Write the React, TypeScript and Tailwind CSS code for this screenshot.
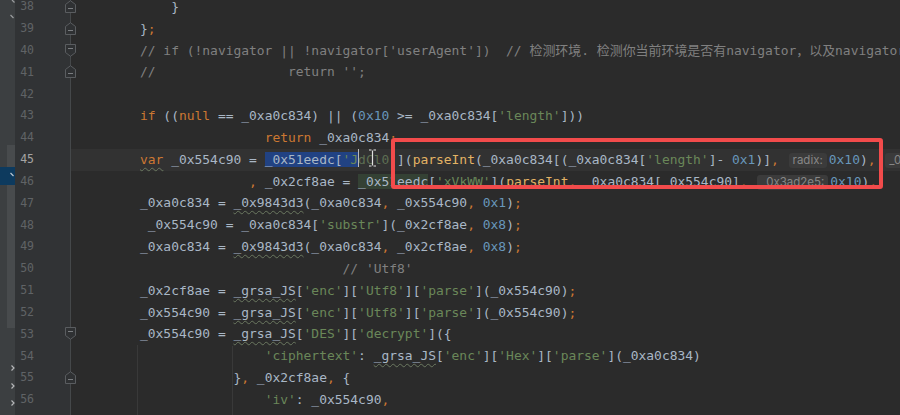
import React from "react";

const K = ({ children }: { children: React.ReactNode }) => <span className="text-[#cc7832]">{children}</span>;
const S = ({ children }: { children: React.ReactNode }) => <span className="text-[#6a8759]">{children}</span>;
const N = ({ children }: { children: React.ReactNode }) => <span className="text-[#6897bb]">{children}</span>;
const C = ({ children }: { children: React.ReactNode }) => <span className="text-[#808080]">{children}</span>;
const F = ({ children }: { children: React.ReactNode }) => <span className="text-[#e3b264]">{children}</span>;
const W = ({ children, cls = "" }: { children: React.ReactNode; cls?: string }) => (
  <span className={`underline decoration-wavy decoration-[#6b7860] decoration-1 underline-offset-[3px] ${cls}`}>{children}</span>
);
const Hint = ({ children }: { children: React.ReactNode }) => (
  <span className="inline-block align-middle h-[15px] leading-[15px] px-[4px] mx-[2px] rounded-[3px] bg-[#3b3b3b] text-[#878787] text-[11.5px] font-['Inter',sans-serif]">
    {children}
  </span>
);

const lines: { n: number; el: React.ReactNode; cur?: boolean }[] = [
  { n: 38, el: <>{"    }"}</> },
  { n: 39, el: <>{"}"}<K>;</K></> },
  {
    n: 40,
    el: <C>{"// if (!navigator || !navigator['userAgent'])  // 检测环境. 检测你当前环境是否有navigator，以及navigator的userAgent"}</C>,
  },
  { n: 41, el: <C>{"//                 return '';"}</C> },
  { n: 42, el: <>{""}</> },
  {
    n: 43,
    el: (
      <>
        <K>if</K>{" (("}<K>null</K>{" == _0xa0c834) || ("}<N>0x10</N>{" >= _0xa0c834["}<S>'length'</S>{"]))"}
      </>
    ),
  },
  { n: 44, el: <>{"                "}<K>return</K>{" _0xa0c834"}<K>;</K></> },
  {
    n: 45,
    cur: true,
    el: (
      <>
        <W cls="text-[#cc7832]">var</W>
        {" _0x554c90 = "}
        <span className="bg-[#214283]">
          {"_0x51eedc["}
          <S>'J</S>
        </span>
        <span className="relative">
          <span className="absolute left-0 top-[-3px] w-[1px] h-[18px] bg-[#bbbbbb]" />
        </span>
        <span className="text-[#5d6e52]">dCl0'</span>
        {"]("}
        <F>parseInt</F>
        {"(_0xa0c834[(_0xa0c834["}
        <S>'length'</S>
        {"]- "}
        <N>0x1</N>
        {")]"}
        <K>,</K>
        {" "}
        <Hint>radix:</Hint>
        <N>0x10</N>
        {")"}
        <K>,</K>
        {" "}
        <Hint>_0x2dbc1b:</Hint>
      </>
    ),
  },
  {
    n: 46,
    el: (
      <>
        {"              "}
        <K>,</K>
        {" _0x2cf8ae = "}
        <span className="bg-[#344134]">_0x51eedc</span>
        {"["}
        <S>'xVkWW'</S>
        {"]("}
        <F>parseInt</F>
        <K>,</K>
        {" _0xa0c834[_0x554c90]"}
        <K>,</K>
        {" "}
        <Hint>_0x3ad2e5:</Hint>
        <N>0x10</N>
        {")"}
        <K>,</K>
      </>
    ),
  },
  {
    n: 47,
    el: (
      <>
        {"_0xa0c834 = "}
        <W>_0x9843d3</W>
        {"(_0xa0c834"}<K>,</K>{" _0x554c90"}<K>,</K>{" "}<N>0x1</N>{")"}<K>;</K>
      </>
    ),
  },
  {
    n: 48,
    el: (
      <>
        {" _0x554c90 = _0xa0c834["}<S>'substr'</S>{"](_0x2cf8ae"}<K>,</K>{" "}<N>0x8</N>{")"}<K>;</K>
      </>
    ),
  },
  {
    n: 49,
    el: (
      <>
        {"_0xa0c834 = "}
        <W>_0x9843d3</W>
        {"(_0xa0c834"}<K>,</K>{" _0x2cf8ae"}<K>,</K>{" "}<N>0x8</N>{")"}<K>;</K>
      </>
    ),
  },
  { n: 50, el: <>{"                          "}<C>{"// 'Utf8'"}</C></> },
  {
    n: 51,
    el: (
      <>
        {"_0x2cf8ae = "}<W>_grsa_JS</W>{"["}<S>'enc'</S>{"]["}<S>'Utf8'</S>{"]["}<S>'parse'</S>{"](_0x554c90)"}<K>;</K>
      </>
    ),
  },
  {
    n: 52,
    el: (
      <>
        {"_0x554c90 = "}<W>_grsa_JS</W>{"["}<S>'enc'</S>{"]["}<S>'Utf8'</S>{"]["}<S>'parse'</S>{"](_0x554c90)"}<K>;</K>
      </>
    ),
  },
  {
    n: 53,
    el: (
      <>
        {"_0x554c90 = "}<W>_grsa_JS</W>{"["}<S>'DES'</S>{"]["}<S>'decrypt'</S>{"]({"}
      </>
    ),
  },
  {
    n: 54,
    el: (
      <>
        {"                "}<S>'ciphertext'</S>{": "}<W>_grsa_JS</W>{"["}<S>'enc'</S>{"]["}<S>'Hex'</S>{"]["}<S>'parse'</S>{"](_0xa0c834)"}
      </>
    ),
  },
  { n: 55, el: <>{"            }"}<K>,</K>{" _0x2cf8ae"}<K>,</K>{" {"}</> },
  { n: 56, el: <>{"                "}<S>'iv'</S>{": _0x554c90"}<K>,</K></> },
];

const foldUp = new Set([38, 39, 41, 55]);
const foldDown = new Set([40, 53]);

const FoldMarker = ({ up }: { up: boolean }) => (
  <svg width="11" height="13" viewBox="0 0 11 13" className="absolute right-[-6px] top-[4px]">
    {up ? (
      <>
        <path d="M0.5 4.5 L5.5 0.7 L10.5 4.5 V12.5 H0.5 Z" fill="#2f3133" stroke="#5a5d60" strokeWidth="1" />
        <path d="M3 8.5 H8" stroke="#7a7d80" strokeWidth="1" />
      </>
    ) : (
      <>
        <path d="M0.5 0.5 H10.5 V8.5 L5.5 12.3 L0.5 8.5 Z" fill="#2f3133" stroke="#5a5d60" strokeWidth="1" />
        <path d="M3 4.5 H8" stroke="#7a7d80" strokeWidth="1" />
      </>
    )}
  </svg>
);

export default function App() {
  return (
    <div className="w-[900px] h-[415px] overflow-hidden flex bg-[#2b2b2b] font-['DejaVu_Sans_Mono','Noto_Sans_CJK_SC',monospace] relative">
      {/* left tool strip */}
      <div className="w-[15px] h-full shrink-0 bg-[#3c3f41] relative">
        <svg width="15" height="24" className="absolute left-0 top-0">
          <path d="M12 0 L14.5 2.5" stroke="#9a9c9e" strokeWidth="1.2" fill="none" />
          <path d="M10.5 15 L13.5 18" stroke="#9a9c9e" strokeWidth="1.2" fill="none" />
        </svg>
        <div className="absolute left-[7px] top-[145px] w-[8px] h-[183px] bg-[#484b4d]" />
        <div className="absolute left-0 top-[167px] w-[15px] h-[18px] bg-[#0d3a5e]">
          <svg width="15" height="18">
            <path d="M10.5 6 L13.5 9" stroke="#b8c4d0" strokeWidth="1.2" fill="none" />
          </svg>
        </div>
        <svg width="15" height="50" className="absolute left-0 top-[362px]">
          <path d="M11.5 3.5 L14 6 L11.5 8.5" stroke="#b5b7b9" strokeWidth="1.2" fill="none" />
          <path d="M11.5 21.5 L14 24 L11.5 26.5" stroke="#b5b7b9" strokeWidth="1.2" fill="none" />
          <path d="M11.5 38.5 L14 41 L11.5 43.5" stroke="#b5b7b9" strokeWidth="1.2" fill="none" />
        </svg>
      </div>

      {/* gutter */}
      <div className="w-[56px] h-full shrink-0 bg-[#313335] border-r border-[#45484a]">
        <div className="mt-[-4px]">
          {lines.map((l) => (
            <div key={l.n} className="relative h-[21.83px] flex items-center">
              <div
                className={`w-[19px] text-right text-[11.5px] ${l.cur ? "text-[#a4a3a3]" : "text-[#606366]"}`}
              >
                {l.n}
              </div>
              {foldUp.has(l.n) && <FoldMarker up />}
              {foldDown.has(l.n) && <FoldMarker up={false} />}
            </div>
          ))}
        </div>
      </div>

      {/* code */}
      <div className="flex-1 h-full relative overflow-hidden">
        <div className="absolute left-[66px] top-[345px] w-[1px] h-[70px] bg-[#393939]" />
        <div className="absolute left-[161px] top-[346px] w-[1px] h-[69px] bg-[#393939]" />
        <div className="mt-[-4px]">
          {lines.map((l) => (
            <div
              key={l.n}
              className={`h-[21.83px] leading-[21.83px] pl-[69px] whitespace-pre text-[12.95px] text-[#a9b7c6] ${
                l.cur ? "bg-[#323232]" : ""
              }`}
            >
              {l.el}
            </div>
          ))}
        </div>
      </div>

      {/* mouse I-beam */}
      <svg width="9" height="18" className="absolute left-[368px] top-[149px]">
        <path d="M1 1 H3.5 M5.5 1 H8 M4.5 1.5 V16.5 M1 17 H3.5 M5.5 17 H8" stroke="#e0e0e0" strokeWidth="1.2" fill="none" />
      </svg>

      {/* red annotation box */}
      <div className="absolute left-[391px] top-[138px] w-[492px] h-[51px] border-[4px] border-[#f24b4b] rounded-[3px]" />
    </div>
  );
}
